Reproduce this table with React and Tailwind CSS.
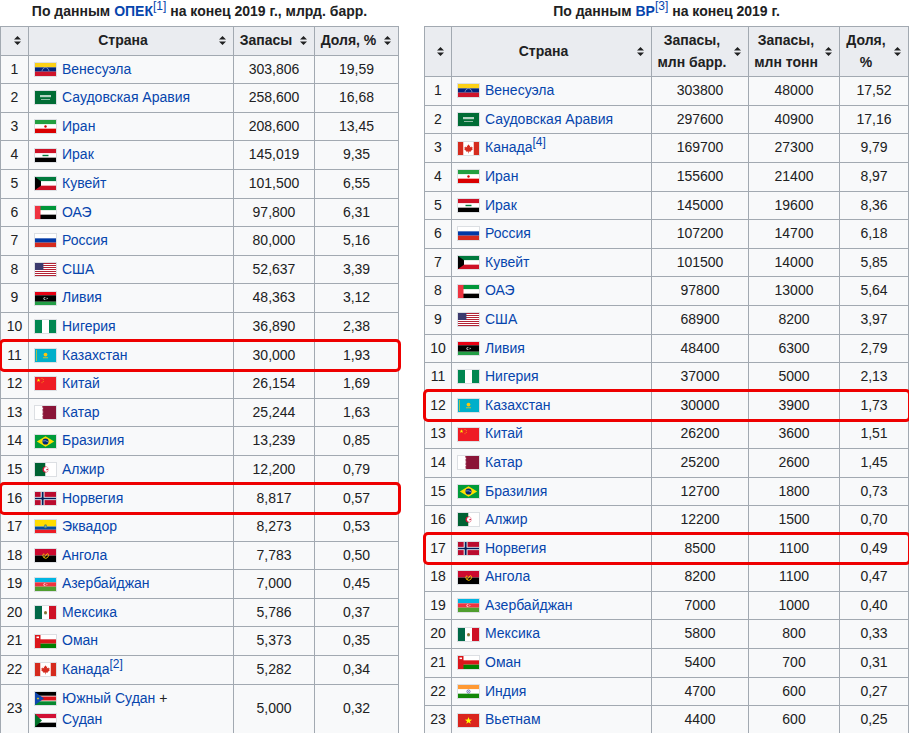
import React from "react"

const starPts = (cx, cy, r) => {
  const pts = []
  for (let i = 0; i < 10; i++) {
    const a = -Math.PI / 2 + (i * Math.PI) / 5
    const rr = i % 2 === 0 ? r : r * 0.4
    pts.push(`${(cx + rr * Math.cos(a)).toFixed(2)},${(cy + rr * Math.sin(a)).toFixed(2)}`)
  }
  return pts.join(" ")
}

const h3 = (a, b, c) => (
  <>
    <rect x="0" y="0" width="21" height="4.34" fill={a} />
    <rect x="0" y="4.33" width="21" height="4.34" fill={b} />
    <rect x="0" y="8.66" width="21" height="4.34" fill={c} />
  </>
)

const v3 = (a, b, c) => (
  <>
    <rect x="0" y="0" width="7" height="13" fill={a} />
    <rect x="7" y="0" width="7" height="13" fill={b} />
    <rect x="14" y="0" width="7" height="13" fill={c} />
  </>
)

const FLAGS = {
  ve: (
    <>
      {h3("#fcd116", "#00247d", "#cf142b")}
      {[0, 1, 2, 3, 4, 5, 6, 7].map(i => {
        const a = Math.PI * (1.1 + i * 0.114)
        return <circle key={i} cx={10.5 + 3.6 * Math.cos(a)} cy={8.4 + 3.6 * Math.sin(a)} r="0.45" fill="#fff" />
      })}
    </>
  ),
  sa: (
    <>
      <rect width="21" height="13" fill="#006c35" />
      <rect x="5" y="4" width="11" height="2.2" fill="#fff" opacity="0.7" />
      <rect x="6" y="8" width="9" height="0.7" fill="#fff" opacity="0.8" />
    </>
  ),
  ir: (
    <>
      {h3("#239f40", "#fff", "#da0000")}
      <circle cx="10.5" cy="6.5" r="1.2" fill="#da0000" />
    </>
  ),
  iq: (
    <>
      {h3("#ce1126", "#fff", "#000")}
      <rect x="7.5" y="5.8" width="6" height="1.4" fill="#007a3d" />
    </>
  ),
  kw: (
    <>
      {h3("#007a3d", "#fff", "#ce1126")}
      <polygon points="0,0 6,4.33 6,8.67 0,13" fill="#000" />
    </>
  ),
  ae: (
    <>
      {h3("#009639", "#fff", "#000")}
      <rect x="0" y="0" width="5.5" height="13" fill="#ef3340" />
    </>
  ),
  ru: h3("#fff", "#0039a6", "#d52b1e"),
  us: (
    <>
      {Array.from({ length: 13 }).map((_, i) => (
        <rect key={i} x="0" y={i} width="21" height="1" fill={i % 2 === 0 ? "#b22234" : "#fff"} />
      ))}
      <rect x="0" y="0" width="8.4" height="7" fill="#3c3b6e" />
    </>
  ),
  ly: (
    <>
      <rect width="21" height="3.25" fill="#e70013" />
      <rect y="3.25" width="21" height="6.5" fill="#000" />
      <rect y="9.75" width="21" height="3.25" fill="#239e46" />
      <circle cx="10" cy="6.5" r="1.5" fill="#fff" />
      <circle cx="10.5" cy="6.5" r="1.2" fill="#000" />
      <polygon points={starPts(12.3, 6.5, 0.9)} fill="#fff" />
    </>
  ),
  ng: v3("#008751", "#fff", "#008751"),
  kz: (
    <>
      <rect width="21" height="13" fill="#00afca" />
      <circle cx="10.5" cy="5.6" r="1.9" fill="#fec50c" />
      <rect x="8" y="8.4" width="5" height="0.8" fill="#fec50c" />
      <rect x="1.2" y="1" width="0.8" height="11" fill="#fec50c" opacity="0.8" />
    </>
  ),
  cn: (
    <>
      <rect width="21" height="13" fill="#ee1c25" />
      <polygon points={starPts(3.5, 3.3, 2)} fill="#ffff00" />
      <polygon points={starPts(7, 1.3, 0.6)} fill="#ffff00" />
      <polygon points={starPts(8.2, 2.7, 0.6)} fill="#ffff00" />
      <polygon points={starPts(8.2, 4.5, 0.6)} fill="#ffff00" />
      <polygon points={starPts(7, 5.8, 0.6)} fill="#ffff00" />
    </>
  ),
  qa: (
    <>
      <rect width="21" height="13" fill="#fff" />
      <polygon points="7,0 21,0 21,13 7,13 8.5,12.3 7,11.6 8.5,10.9 7,10.2 8.5,9.5 7,8.8 8.5,8.1 7,7.4 8.5,6.7 7,6 8.5,5.3 7,4.6 8.5,3.9 7,3.2 8.5,2.5 7,1.8 8.5,1.1 7,0.4" fill="#8a1538" />
    </>
  ),
  br: (
    <>
      <rect width="21" height="13" fill="#009b3a" />
      <polygon points="1.8,6.5 10.5,1.2 19.2,6.5 10.5,11.8" fill="#fedf00" />
      <circle cx="10.5" cy="6.5" r="3.1" fill="#002776" />
      <path d="M7.6 6 Q10.5 5 13.4 7" stroke="#fff" strokeWidth="0.5" fill="none" />
    </>
  ),
  dz: (
    <>
      <rect width="10.5" height="13" fill="#006233" />
      <rect x="10.5" width="10.5" height="13" fill="#fff" />
      <circle cx="10.5" cy="6.5" r="3" fill="#d21034" />
      <circle cx="11.3" cy="6.5" r="2.4" fill="#fff" />
      <polygon points={starPts(12.2, 6.5, 1.3)} fill="#d21034" />
    </>
  ),
  no: (
    <>
      <rect width="21" height="13" fill="#ba0c2f" />
      <rect x="5.7" y="0" width="3.8" height="13" fill="#fff" />
      <rect x="0" y="4.9" width="21" height="3.2" fill="#fff" />
      <rect x="6.7" y="0" width="1.9" height="13" fill="#00205b" />
      <rect x="0" y="5.7" width="21" height="1.6" fill="#00205b" />
    </>
  ),
  ec: (
    <>
      <rect width="21" height="6.5" fill="#ffdd00" />
      <rect y="6.5" width="21" height="3.25" fill="#034ea2" />
      <rect y="9.75" width="21" height="3.25" fill="#ed1c24" />
      <ellipse cx="10.5" cy="6.3" rx="1.6" ry="2" fill="#6c8f4f" />
      <circle cx="10.5" cy="6.3" r="0.9" fill="#5aa4d8" />
    </>
  ),
  ao: (
    <>
      <rect width="21" height="6.5" fill="#cc092f" />
      <rect y="6.5" width="21" height="6.5" fill="#000" />
      <path d="M8.6 4.6 A2.8 2.8 0 1 0 12.6 4.4" stroke="#ffcb00" strokeWidth="0.9" fill="none" />
      <path d="M8.8 8.8 L12.3 4.6" stroke="#ffcb00" strokeWidth="0.9" />
      <polygon points={starPts(9.8, 5.2, 0.8)} fill="#ffcb00" />
    </>
  ),
  az: (
    <>
      {h3("#00b5e2", "#ef3340", "#509e2f")}
      <circle cx="10" cy="6.5" r="1.5" fill="#fff" />
      <circle cx="10.5" cy="6.5" r="1.2" fill="#ef3340" />
      <polygon points={starPts(12, 6.5, 0.7)} fill="#fff" />
    </>
  ),
  mx: (
    <>
      {v3("#006847", "#fff", "#ce1126")}
      <circle cx="10.5" cy="6.5" r="1.5" fill="#8c6d2c" />
      <path d="M9 7.6 Q10.5 8.8 12 7.6" stroke="#2e7d32" strokeWidth="0.5" fill="none" />
    </>
  ),
  om: (
    <>
      {h3("#fff", "#db161b", "#008000")}
      <rect x="0" y="0" width="5.5" height="13" fill="#db161b" />
      <rect x="1.5" y="1.5" width="2.5" height="1.6" fill="#fff" />
    </>
  ),
  ca: (
    <>
      <rect width="21" height="13" fill="#fff" />
      <rect width="5.25" height="13" fill="#d52b1e" />
      <rect x="15.75" width="5.25" height="13" fill="#d52b1e" />
      <polygon points="10.5,2.3 11.3,3.8 12.2,3.4 11.8,5.6 13.4,4.6 13.8,5.5 14.8,5.3 14.2,7 14.8,7.4 12.6,8.9 12.9,9.7 10.8,9.5 10.8,11.2 10.2,11.2 10.2,9.5 8.1,9.7 8.4,8.9 6.2,7.4 6.8,7 6.2,5.3 7.2,5.5 7.6,4.6 9.2,5.6 8.8,3.4 9.7,3.8" fill="#d52b1e" />
    </>
  ),
  ss: (
    <>
      <rect width="21" height="13" fill="#fff" />
      <rect width="21" height="3.7" fill="#000" />
      <rect y="4.5" width="21" height="4" fill="#da121a" />
      <rect y="9.3" width="21" height="3.7" fill="#078930" />
      <polygon points="0,0 9,6.5 0,13" fill="#0f47af" />
      <polygon points={starPts(3, 6.5, 1.4)} fill="#fcdd09" />
    </>
  ),
  sd: (
    <>
      {h3("#d21034", "#fff", "#000")}
      <polygon points="0,0 7,6.5 0,13" fill="#007229" />
    </>
  ),
  in: (
    <>
      {h3("#ff9933", "#fff", "#138808")}
      <circle cx="10.5" cy="6.5" r="1.6" fill="none" stroke="#000080" strokeWidth="0.5" />
      <circle cx="10.5" cy="6.5" r="0.4" fill="#000080" />
    </>
  ),
  vn: (
    <>
      <rect width="21" height="13" fill="#da251d" />
      <polygon points={starPts(10.5, 6.8, 3.8)} fill="#ffff00" />
    </>
  ),
}

function Flag({ code }) {
  return (
    <span className="inline-flex shrink-0 border border-[#dcdfe3] bg-white">
      <svg width="21" height="13" viewBox="0 0 21 13" preserveAspectRatio="none" className="block">
        {FLAGS[code]}
      </svg>
    </span>
  )
}

function SortIcon() {
  return (
    <svg width="7" height="9" viewBox="0 0 7 9" className="shrink-0 block">
      <path d="M0 3.6 L3.5 0 L7 3.6 Z M0 5.4 L3.5 9 L7 5.4 Z" fill="#202122" />
    </svg>
  )
}

// preflight gives sup top: -0.5em
function Ref({ n }) {
  return <sup className="text-[12px] leading-none font-normal text-[#0645ad]">[{n}]</sup>
}

function Country({ code, name, refNum }) {
  return (
    <div className="flex items-center gap-[5px]">
      <Flag code={code} />
      <span className="text-[#0645ad]">
        {name}
        {refNum && <Ref n={refNum} />}
      </span>
    </div>
  )
}

const OPEC = [
  ["ve", "Венесуэла", "303,806", "19,59"],
  ["sa", "Саудовская Аравия", "258,600", "16,68"],
  ["ir", "Иран", "208,600", "13,45"],
  ["iq", "Ирак", "145,019", "9,35"],
  ["kw", "Кувейт", "101,500", "6,55"],
  ["ae", "ОАЭ", "97,800", "6,31"],
  ["ru", "Россия", "80,000", "5,16"],
  ["us", "США", "52,637", "3,39"],
  ["ly", "Ливия", "48,363", "3,12"],
  ["ng", "Нигерия", "36,890", "2,38"],
  ["kz", "Казахстан", "30,000", "1,93"],
  ["cn", "Китай", "26,154", "1,69"],
  ["qa", "Катар", "25,244", "1,63"],
  ["br", "Бразилия", "13,239", "0,85"],
  ["dz", "Алжир", "12,200", "0,79"],
  ["no", "Норвегия", "8,817", "0,57"],
  ["ec", "Эквадор", "8,273", "0,53"],
  ["ao", "Ангола", "7,783", "0,50"],
  ["az", "Азербайджан", "7,000", "0,45"],
  ["mx", "Мексика", "5,786", "0,37"],
  ["om", "Оман", "5,373", "0,35"],
  ["ca", "Канада", "5,282", "0,34", 2],
]

const BP = [
  ["ve", "Венесуэла", "303800", "48000", "17,52"],
  ["sa", "Саудовская Аравия", "297600", "40900", "17,16"],
  ["ca", "Канада", "169700", "27300", "9,79", 4],
  ["ir", "Иран", "155600", "21400", "8,97"],
  ["iq", "Ирак", "145000", "19600", "8,36"],
  ["ru", "Россия", "107200", "14700", "6,18"],
  ["kw", "Кувейт", "101500", "14000", "5,85"],
  ["ae", "ОАЭ", "97800", "13000", "5,64"],
  ["us", "США", "68900", "8200", "3,97"],
  ["ly", "Ливия", "48400", "6300", "2,79"],
  ["ng", "Нигерия", "37000", "5000", "2,13"],
  ["kz", "Казахстан", "30000", "3900", "1,73"],
  ["cn", "Китай", "26200", "3600", "1,51"],
  ["qa", "Катар", "25200", "2600", "1,45"],
  ["br", "Бразилия", "12700", "1800", "0,73"],
  ["dz", "Алжир", "12200", "1500", "0,70"],
  ["no", "Норвегия", "8500", "1100", "0,49"],
  ["ao", "Ангола", "8200", "1100", "0,47"],
  ["az", "Азербайджан", "7000", "1000", "0,40"],
  ["mx", "Мексика", "5800", "800", "0,33"],
  ["om", "Оман", "5400", "700", "0,31"],
  ["in", "Индия", "4700", "600", "0,27"],
  ["vn", "Вьетнам", "4400", "600", "0,25"],
]

const th = "border border-[#a2a9b1] bg-[#eaecf0] pl-[5px] pr-[7px] py-[3px] font-bold align-middle"
const td = "border border-[#a2a9b1] px-[5px] py-[3px] align-middle"
const hl = "outline-3 outline-solid outline-[#ee0000] -outline-offset-1 rounded-[3px]"

function Head({ children }) {
  return (
    <div className="flex items-center gap-[7px]">
      <span className="flex-1 text-center">{children}</span>
      <SortIcon />
    </div>
  )
}

function OpecTable() {
  return (
    <table className="w-[398px] table-fixed border-collapse bg-[#f8f9fa]">
      <caption className="caption-top pb-[4px] font-bold text-center leading-[22px]">
        По данным <span className="text-[#0645ad]">ОПЕК</span>
        <Ref n={1} /> на конец 2019 г., млрд. барр.
      </caption>
      <colgroup>
        <col className="w-[28px]" />
        <col className="w-[205px]" />
        <col className="w-[81px]" />
        <col className="w-[84px]" />
      </colgroup>
      <thead>
        <tr>
          <th className={th}><Head /></th>
          <th className={th}><Head>Страна</Head></th>
          <th className={th}><Head>Запасы</Head></th>
          <th className={th}><Head>Доля, %</Head></th>
        </tr>
      </thead>
      <tbody>
        {OPEC.map((r, i) => (
          <tr key={i} className={i === 10 || i === 15 ? hl : ""}>
            <td className={`${td} text-center px-0`}>{i + 1}</td>
            <td className={td}><Country code={r[0]} name={r[1]} refNum={r[4]} /></td>
            <td className={`${td} text-center`}>{r[2]}</td>
            <td className={`${td} text-center`}>{r[3]}</td>
          </tr>
        ))}
        <tr>
          <td className={`${td} text-center px-0`}>23</td>
          <td className={td}>
            <div className="flex items-center gap-[5px]">
              <Flag code="ss" />
              <span><span className="text-[#0645ad]">Южный Судан</span> +</span>
            </div>
            <Country code="sd" name="Судан" />
          </td>
          <td className={`${td} text-center`}>5,000</td>
          <td className={`${td} text-center`}>0,32</td>
        </tr>
      </tbody>
    </table>
  )
}

function BpTable() {
  return (
    <table className="w-[484px] table-fixed border-collapse bg-[#f8f9fa]">
      <caption className="caption-top pb-[4px] font-bold text-center leading-[22px]">
        По данным <span className="text-[#0645ad]">BP</span>
        <Ref n={3} /> на конец 2019 г.
      </caption>
      <colgroup>
        <col className="w-[27px]" />
        <col className="w-[200px]" />
        <col className="w-[97px]" />
        <col className="w-[91px]" />
        <col className="w-[69px]" />
      </colgroup>
      <thead>
        <tr>
          <th className={th}><Head /></th>
          <th className={th}><Head>Страна</Head></th>
          <th className={th}><Head>Запасы,<br />млн барр.</Head></th>
          <th className={th}><Head>Запасы,<br />млн тонн</Head></th>
          <th className={th}><Head>Доля,<br />%</Head></th>
        </tr>
      </thead>
      <tbody>
        {BP.map((r, i) => (
          <tr key={i} className={i === 11 || i === 16 ? hl : ""}>
            <td className={`${td} text-center px-0`}>{i + 1}</td>
            <td className={td}><Country code={r[0]} name={r[1]} refNum={r[5]} /></td>
            <td className={`${td} text-center`}>{r[2]}</td>
            <td className={`${td} text-center`}>{r[3]}</td>
            <td className={`${td} text-center`}>{r[4]}</td>
          </tr>
        ))}
      </tbody>
    </table>
  )
}

export default function App() {
  return (
    <div className="min-h-screen bg-white font-['Liberation_Sans',Arial,sans-serif] text-[14px] leading-[21.6px] text-[#202122]">
      <div className="flex items-start gap-[25px]">
        <OpecTable />
        <BpTable />
      </div>
    </div>
  )
}
